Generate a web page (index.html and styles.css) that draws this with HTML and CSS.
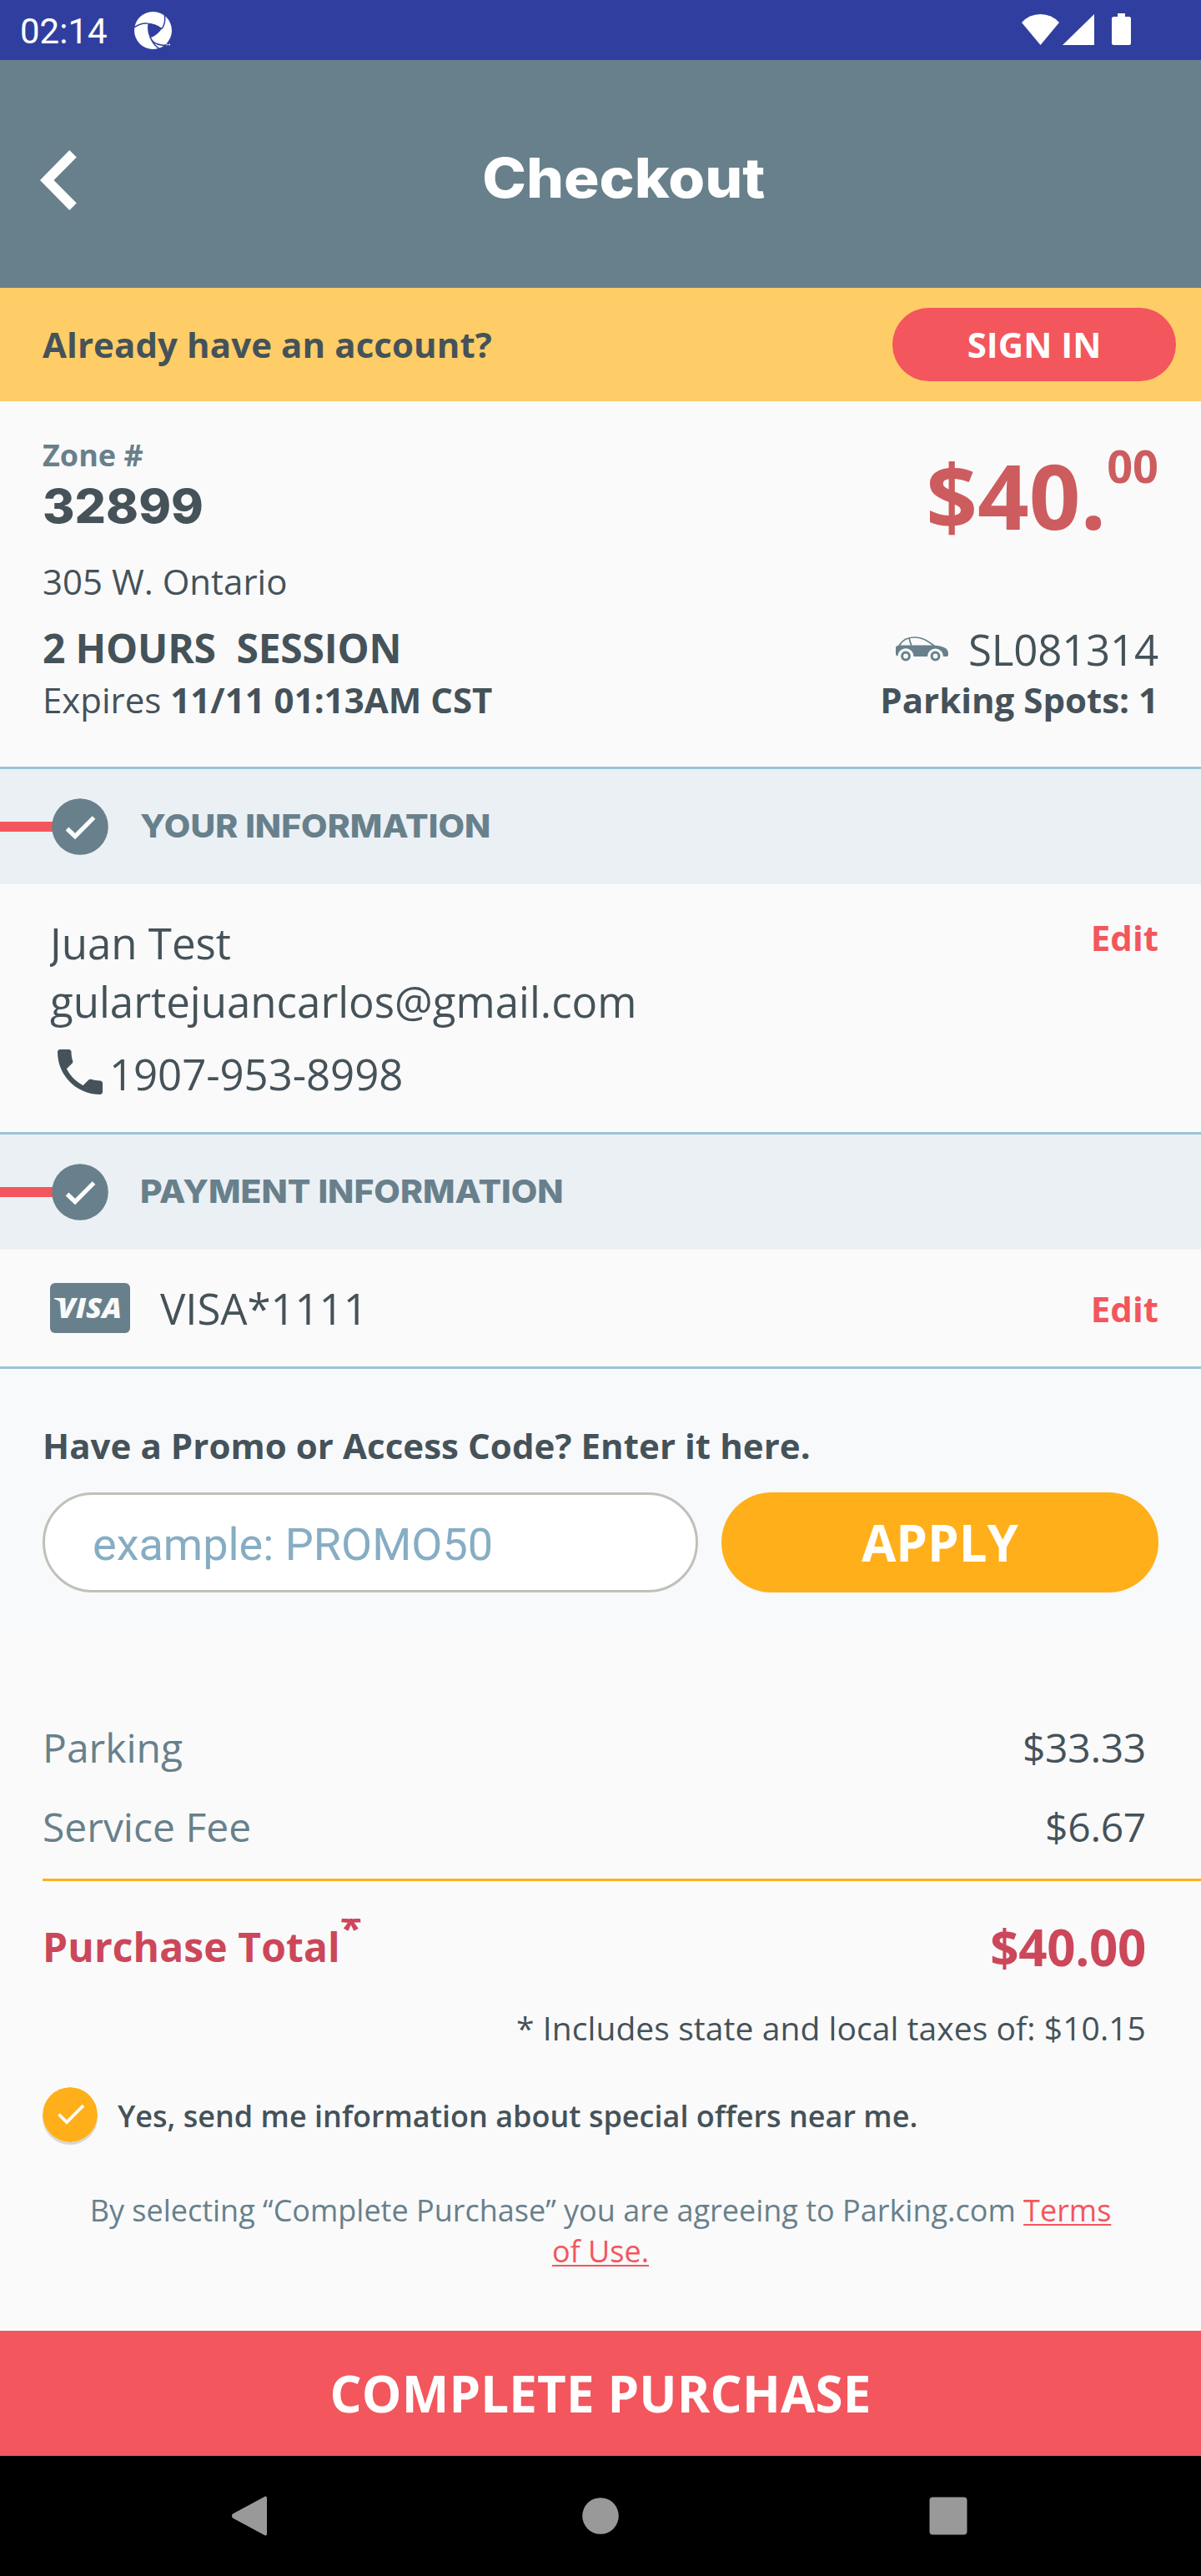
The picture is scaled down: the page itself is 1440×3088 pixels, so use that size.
FILE: index.html
```html
<!DOCTYPE html>
<html lang="en">
<head>
<meta charset="utf-8">
<title>Checkout</title>
<link rel="stylesheet" href="styles.css">
</head>
<body>
<div class="status-bar">
  <span class="status-time">02:14</span>
  <svg class="status-logo" width="45" height="45" viewBox="0 0 45 45">
    <circle cx="22.5" cy="22.5" r="22.5" fill="#fff"/>
    <path d="M17 14.5Q26 14 33 20.5Q27 29 19.5 31Q15 22 17 14.5Z" fill="#303f9f"/>
    <path d="M0 19C8 12.500 21 12 33 20.500M33 20.500C37 15 37.500 9 36 2M17.500 14C15 23 20 38 30 44.500M19 31C23 38.500 29 40.500 40 40.500" fill="none" stroke="#303f9f" stroke-width="1.500"/>
    <path d="M38 41h7v4h-9z" fill="#303f9f"/>
    <path d="M38.500 39.500h1.500M41 39.500h2" stroke="#fff" stroke-width="1.500"/>
  </svg>
  <svg class="status-icons" width="131" height="40" viewBox="0 0 131 40" fill="#fff">
    <path d="M0 12Q9 2 22.500 2T45 12L22.500 39Z"/>
    <path d="M49 39L87 2V39Z"/>
    <path d="M115 1h9v4h4.500q2.500 0 2.500 2.500v29q0 2.500-2.500 2.500h-18q-2.500 0-2.500-2.500v-29q0-2.500 2.500-2.500h4.500z"/>
  </svg>
</div>

<header class="header">
  <svg class="back" width="44" height="72" viewBox="0 0 44 72"><path d="M35.300 0L43.800 8.500 16.500 36 43.800 63.500 35.300 72 0 36Z" fill="#fff"/></svg>
  <h1 class="title"><span class="wide-title">Checkout</span></h1>
</header>

<div class="account">
  <span class="account-text">Already have an account?</span>
  <button class="sign-in">SIGN IN</button>
</div>

<section class="summary">
  <div class="summary-left">
    <div class="zone-label">Zone #</div>
    <div class="zone-number">32899</div>
    <div class="address">305 W. Ontario</div>
    <div class="session">2 HOURS&nbsp; SESSION</div>
    <div class="expires">Expires <b>11/11 01:13AM CST</b></div>
  </div>
  <div class="summary-right">
    <div class="price"><span class="price-main">$40.</span><span class="price-cents">00</span></div>
    <div class="vehicle">
      <svg width="63" height="30" viewBox="0 0 63 30">
        <path d="M4 11C8 4 13 1 22 1S36 3.500 46 11M16 1.500Q17 7 19 11" fill="none" stroke="#68808b" stroke-width="1.700"/>
        <path d="M4 10.500H45.500C52 11 57 12 60.500 14.500Q63 17 63 20V22Q63 24 61 24H57A9.500 9.500 0 0 0 38 24H21.500A9.500 9.500 0 0 0 2.500 23.500Q0 23 0 21V13.500Q0 11 4 10.500Z" fill="#68808b"/>
        <circle cx="12" cy="23.500" r="4.400" fill="none" stroke="#68808b" stroke-width="3"/>
        <circle cx="47.500" cy="23.500" r="4.400" fill="none" stroke="#68808b" stroke-width="3"/>
      </svg>
      <span>SL081314</span>
    </div>
    <div class="spots">Parking Spots: 1</div>
  </div>
</section>

<div class="step">
  <span class="step-line"></span>
  <svg class="step-icon" width="68" height="68" viewBox="0 0 68 68"><circle cx="34" cy="34" r="33.800" fill="#68808b"/><path d="M18.500 36.500L28 45.500 50.500 23" fill="none" stroke="#fff" stroke-width="5.200"/></svg>
  <h2 class="step-title">YOUR INFORMATION</h2>
</div>
<section class="contact">
  <div class="contact-lines">
    <div class="line">Juan Test</div>
    <div class="line">gulartejuancarlos@gmail.com</div>
    <div class="line phone">
      <svg width="72" height="72" viewBox="0 0 24 24" fill="#455259"><path d="M6.620 10.790c1.440 2.830 3.760 5.140 6.590 6.590l2.200-2.200c.27-.27.67-.36 1.020-.24 1.120.37 2.330.57 3.570.57.55 0 1 .45 1 1V20c0 .55-.45 1-1 1-9.390 0-17-7.610-17-17 0-.55.45-1 1-1h3.500c.55 0 1 .45 1 1 0 1.250.2 2.450.57 3.570.11.35.03.74-.25 1.020l-2.200 2.200z"/></svg>
      <span>1907-953-8998</span>
    </div>
  </div>
  <a class="edit">Edit</a>
</section>

<div class="step">
  <span class="step-line"></span>
  <svg class="step-icon" width="68" height="68" viewBox="0 0 68 68"><circle cx="34" cy="34" r="33.800" fill="#68808b"/><path d="M18.500 36.500L28 45.500 50.500 23" fill="none" stroke="#fff" stroke-width="5.200"/></svg>
  <h2 class="step-title">PAYMENT INFORMATION</h2>
</div>
<section class="payment">
  <svg width="96" height="60" viewBox="0 0 96 60">
    <rect width="96" height="60" rx="6" fill="#68808b"/>
    <path d="M5 18H14L19 32Q14 21 5 19.200Z" fill="#fafafa"/>
    <text class="card-brand" x="9" y="42" textLength="77" lengthAdjust="spacingAndGlyphs">VISA</text>
  </svg>
  <span class="card-number">VISA*1111</span>
  <a class="edit">Edit</a>
</section>

<section class="promo">
  <label class="promo-label" for="code">Have a Promo or Access Code? Enter it here.</label>
  <div class="promo-row">
    <input class="promo-input" id="code" type="text" placeholder="example: PROMO50">
    <button class="apply">APPLY</button>
  </div>
</section>

<section class="totals">
  <div class="row"><span class="row-label">Parking</span><span class="row-value">$33.33</span></div>
  <div class="row"><span class="row-label">Service Fee</span><span class="row-value">$6.67</span></div>
  <div class="total">
    <span class="total-label">Purchase Total</span><span class="total-star"><span class="star">*</span></span>
    <span class="total-value">$40.00</span>
  </div>
  <div class="taxes">* Includes state and local taxes of: $10.15</div>
</section>

<div class="offers">
  <svg class="offers-check" width="66" height="66" viewBox="0 0 66 66"><circle cx="33" cy="33" r="33" fill="#ffaf1a"/><path d="M19.500 32.500L29 42 49 22" fill="none" stroke="#fff" stroke-width="3.800"/></svg>
  <span class="offers-text">Yes, send me information about special offers near me.</span>
</div>
<p class="terms">By selecting “Complete Purchase” you are agreeing to Parking.com <a>Terms of Use.</a></p>

<button class="complete">COMPLETE PURCHASE</button>
<nav class="nav">
  <svg width="46" height="48" viewBox="0 0 46 48"><path d="M41 .5Q43 0 43 2.500V45.500Q43 48 41 47.500L2 26.500Q0 24 2 21.500Z" fill="#999"/></svg>
  <svg class="nav-home" width="44" height="44" viewBox="0 0 44 44"><circle cx="22" cy="22" r="21.800" fill="#999"/></svg>
  <svg width="46" height="46" viewBox="0 0 46 46"><rect x=".5" y=".5" width="45" height="45" rx="4" fill="#999"/></svg>
</nav>
</body>
</html>
```
FILE: styles.css
```css
* { box-sizing: border-box; }

body {
  margin: 0;
  width: 1440px;
  background: #fafafa;
  color: #455259;
  font-family: "Open Sans", "Noto Sans", sans-serif;
  font-size: 42px;
  line-height: 57px;
}

svg { display: block; flex: none; }
b { font-weight: 700; }
h1, h2, p { margin: 0; }
button { border: 0; padding: 0; color: #fff; font-family: inherit; font-weight: 700; }

/* Device status bar */
.status-bar { display: flex; height: 72px; padding-left: 24px; background: #303f9f; color: #fff; }
.status-time { width: 137px; font: 42px/75px Roboto, sans-serif; }
.status-logo { margin-top: 14px; }
.status-icons { margin: 15px 84px 0 auto; }

/* Header */
.header { display: flex; align-items: center; height: 273px; padding: 9px 36px 0 48px; background: #68808b; }
.back { margin-top: 6px; }
.title { flex: 1; text-align: center; color: #fff; font: 800 66px/78px Inter, sans-serif; }
.wide-title { display: inline-block; transform: scaleX(1.075); }

.account { display: flex; align-items: center; justify-content: space-between; height: 136px; padding: 0 30px 0 51px; background: #ffcd67; font-weight: 700; }
.account-text { margin-top: -2px; letter-spacing: .08px; }
.sign-in { width: 340px; height: 88px; padding-bottom: 2px; border-radius: 44px; background: #f3565d; font-size: 42px; line-height: 57px; }

/* Session summary */
.summary { display: flex; justify-content: space-between; height: 438px; padding: 39px 51px 0; }
.zone-label { margin-top: 1px; color: #68808b; font-weight: 700; font-size: 36px; line-height: 49px; }
.zone-number { width: max-content; margin-top: 4px; font: 800 56px/66px Inter, sans-serif; transform: scaleX(1.05); transform-origin: left; }
.address { margin-top: 28px; }
.session { margin-top: 19px; font-weight: 700; font-size: 48px; line-height: 65px; letter-spacing: -.2px; }
.expires { margin-top: 1px; }
.summary-right { display: flex; flex-direction: column; align-items: flex-end; }
.price { display: flex; gap: 1px; height: 147px; color: #cd5c5f; font-weight: 700; }
.price-main { font-size: 108px; line-height: 148px; }
.price-cents { font-size: 54px; line-height: 76px; }
.vehicle { display: flex; align-items: center; gap: 24px; margin-top: 76px; font-size: 51px; line-height: 70px; letter-spacing: -.2px; }
.spots { margin-top: -3px; font-weight: 700; }

/* Step headings */
.step { display: flex; align-items: center; height: 141px; border-top: 3px solid #9dc3d8; background: #ebf0f5; }
.step-line { width: 63px; height: 12px; background: #f3565d; }
.step-icon { margin-left: -1px; }
.step-title { margin: -3px 0 0 38px; color: #68808b; font: 800 38.5px/48px Inter, sans-serif; transform: scaleX(1.062); transform-origin: left; }

.contact { display: flex; justify-content: space-between; height: 297px; padding: 35px 51px 0 60px; }
.line { overflow: hidden; font-size: 51px; line-height: 70px; }
.phone { display: flex; margin-top: 14px; }
.phone svg { margin-right: -1px; }
.phone span { margin-top: 3px; letter-spacing: -.1px; }
.edit { color: #f3565d; font-weight: 700; }

.payment { display: flex; align-items: center; height: 143px; padding: 0 51px 0 60px; border-bottom: 3px solid #9dc3d8; }
.card-brand { fill: #fafafa; font: italic 800 34px "Open Sans", sans-serif; }
.card-number { flex: 1; margin-left: 36px; font-size: 51px; line-height: 70px; letter-spacing: -.1px; }

/* Promo code */
.promo { height: 316px; padding: 63px 51px 0; background: #f8f9fb; }
.promo-label { display: block; font-weight: 700; letter-spacing: .06px; }
.promo-row { display: flex; gap: 28px; margin-top: 28px; }
.promo-input { width: 786px; height: 120px; padding: 5px 0 0 57px; border: 3px solid #bfc1b8; border-radius: 60px; background: #fff; font: 54px Roboto, sans-serif; }
.promo-input::placeholder { color: #86adc3; opacity: 1; }
.apply { flex: 1; height: 120px; border-radius: 60px; background: #ffaf1a; font-size: 60px; line-height: 82px; }

/* Price breakdown */
.totals { padding: 105px 0 0 51px; }
.row { display: flex; justify-content: space-between; margin-bottom: 30px; padding-right: 66px; font-size: 48px; line-height: 65px; }
.row-label { color: #68808b; }
.row-value { letter-spacing: -.3px; }
.total { display: flex; align-items: flex-start; padding: 38px 66px 0 0; border-top: 3px solid #ffaf1a; color: #cc475a; font-weight: 700; }
.total-label { margin-top: 8px; font-size: 48px; line-height: 65px; letter-spacing: .1px; }
.total-star { height: 40px; margin-top: 7px; overflow: hidden; }
.star { display: block; margin-top: -22px; font-size: 48px; line-height: 65px; }
.total-value { margin-left: auto; font-size: 60px; line-height: 82px; letter-spacing: -.3px; }
.taxes { margin: 29px 66px 0 0; text-align: right; font-size: 39px; line-height: 53px; letter-spacing: .07px; }

.offers { display: flex; align-items: center; gap: 24px; margin: 45px 0 0 51px; font-weight: 600; font-size: 36px; line-height: 49px; }
.offers-text { margin-top: 2px; }
.offers-check { border-radius: 50%; box-shadow: 0 3px 1px rgba(0, 0, 0, .15); }
.terms { height: 169px; margin-top: 57px; padding: 0 100px; text-align: center; color: #68808b; font-size: 36px; line-height: 49px; }
.terms a { color: #f3565d; text-decoration: underline; text-decoration-thickness: 2px; text-underline-offset: 3px; text-decoration-skip-ink: none; }

.complete { display: block; width: 1440px; height: 150px; background: #f3565d; font-size: 60px; line-height: 82px; letter-spacing: .15px; }
.nav { display: flex; align-items: center; justify-content: space-between; height: 144px; padding: 0 280px 0 277px; background: #000; }
.nav-home { margin-left: 3px; }
```
